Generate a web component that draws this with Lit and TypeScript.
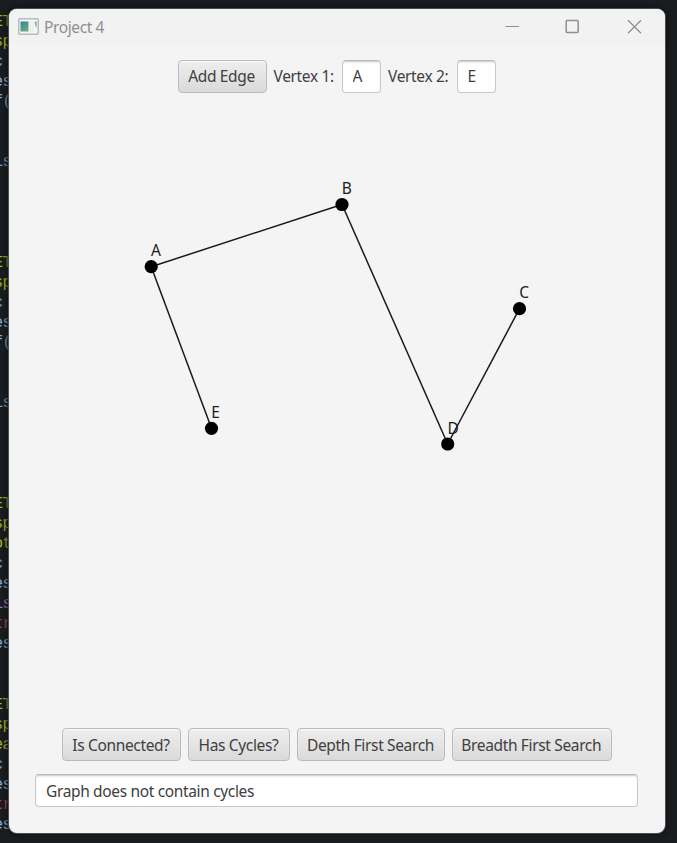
import { LitElement, html, svg, css } from "lit";
import { customElement, property } from "lit/decorators.js";

type Tone = "lime" | "blue" | "sky" | "violet" | "red";

// Editor rows visible beside the window; empty rows keep the line rhythm.
const CODE: Record<number, [string, Tone]> = {
  0: ["ET", "lime"], 1: ["sp", "lime"], 2: ["c", "blue"], 3: ["es", "sky"], 4: ["f(", "sky"], 7: ["is", "blue"],
  12: ["ET", "lime"], 13: ["sp", "lime"], 14: ["c", "blue"], 15: ["es", "sky"], 16: ["f(", "sky"], 19: ["is", "blue"],
  24: ["ET", "lime"], 25: ["sp", "lime"], 26: ["ot", "lime"], 27: ["c", "blue"], 28: ["es", "sky"], 29: ["is", "violet"],
  30: ["tr", "red"], 31: ["es", "sky"],
  34: ["ET", "lime"], 35: ["sp", "lime"], 36: ["ea", "lime"], 37: ["c", "blue"], 38: ["es", "sky"], 39: ["tr", "red"], 40: ["es", "sky"],
};

const VERTICES: Record<string, [number, number]> = {
  A: [142.2, 173.7], B: [333, 111.5], C: [510.5, 215.7], D: [438.7, 351], E: [202.5, 335.3],
};
const EDGES = ["AB", "AE", "BD", "DC"];

@customElement("code-gutter")
export class CodeGutter extends LitElement {
  static styles = css`
    :host { display: block; overflow: hidden; padding-top: 11.5px; box-sizing: border-box;
      font: 16px/20.1px "Liberation Mono", monospace; }
    .row { height: 20.1px; margin-left: -6.5px; white-space: pre; letter-spacing: -0.6px; }
    .lime { color: #a3b521; }
    .blue { color: #6fa3c7; }
    .sky { color: #86afd0; }
    .violet { color: #a473b5; }
    .red { color: #b8464b; }
  `;
  render() {
    return Array.from({ length: 41 }, (_, i) => {
      const [text, tone] = CODE[i] ?? ["", "sky"];
      return html`<div class="row ${tone}">${text}</div>`;
    });
  }
}

@customElement("title-bar")
export class TitleBar extends LitElement {
  static styles = css`
    :host { display: flex; align-items: center; height: 36px; background: #f2f2f2; padding-left: 9px;
      font: 15.5px/20px "Noto Sans", sans-serif; color: #8f8f8f; box-sizing: border-box; }
    .icon { width: 21px; height: 17px; margin-right: 5px; flex: none; position: relative; top: -1px; }
    .title { letter-spacing: -0.38px; flex: 1; }
    .controls { width: 162px; height: 36px; flex: none; }
  `;
  render() {
    return html`
      <svg class="icon" viewBox="0 0 21 17">
        <rect x="0.75" y="0.75" width="19.5" height="15.5" rx="1" fill="#f5f5f5" stroke="#b6bbc0" stroke-width="1.5" />
        <defs><linearGradient id="g" x2="0.6" y2="1"><stop offset="0" stop-color="#3b7fa6" /><stop offset="1" stop-color="#63b07c" /></linearGradient></defs>
        <rect x="2.5" y="3.5" width="8" height="10" fill="url(#g)" />
        <path d="M12.5 3v11M15 3v11" stroke="#e5e7e8" />
        <path d="M16.8 3.5h1.7v6.5q-1.7-2-1.7-6.5" fill="#64aa96" />
      </svg>
      <span class="title">Project 4</span>
      <svg class="controls" viewBox="0 0 162 36" fill="none" stroke="#8f8f8f" stroke-width="1.3">
        <path d="M2.5 17.5h13.5" stroke-width="1" />
        <rect x="63.2" y="11.6" width="12" height="12" rx="1" stroke-width="1.5" />
        <path d="M125 11.3l13 13M138 11.3l-13 13" />
      </svg>`;
  }
}

@customElement("push-button")
export class PushButton extends LitElement {
  static styles = css`
    :host { display: block; flex: none; }
    .button { box-sizing: border-box; width: 100%; height: 33px; padding: 0 1px 0 0; border: 1.5px solid #bababa; border-radius: 4px;
      background: linear-gradient(#eeeeee, #dadada); box-shadow: inset 0 1px 1px #fafafa;
      font: inherit; letter-spacing: inherit; color: #404040; white-space: nowrap; }
  `;
  render() {
    return html`<button class="button"><slot></slot></button>`;
  }
}

@customElement("text-box")
export class TextBox extends LitElement {
  @property() value = "";
  static styles = css`
    :host { display: block; flex: none; }
    .input { display: block; box-sizing: border-box; width: 100%; height: 33px; padding: 0 0 0 10px; outline: 0;
      border: 1px solid #c9c9c9; border-top-color: #b8b8b8; border-radius: 4px; background: #fff;
      box-shadow: inset 0 2px 2px -1px #c8c8c8; font: inherit; letter-spacing: inherit; color: #404040; }
  `;
  render() {
    return html`<input class="input" .value=${this.value} />`;
  }
}

@customElement("graph-pane")
export class GraphPane extends LitElement {
  static styles = css`
    :host { display: block; flex: 1; min-height: 0; }
    .graph { display: block; width: 656px; height: 100%; overflow: visible; font: 15.5px "Noto Sans", sans-serif; }
    .edge { stroke: #1a1a1a; stroke-width: 1.5; }
    .label { fill: #1c1c1c; }
  `;
  render() {
    return html`<svg class="graph">
      ${EDGES.map(([a, b]) => svg`<line class="edge" x1=${VERTICES[a][0]} y1=${VERTICES[a][1]} x2=${VERTICES[b][0]} y2=${VERTICES[b][1]} />`)}
      ${Object.entries(VERTICES).map(([name, [x, y]]) => svg`
        <circle cx=${x} cy=${y} r="6.6" />
        <text class="label" x=${x - 0.3} y=${y - 10.5}>${name}</text>`)}
    </svg>`;
  }
}

@customElement("app-root")
export class AppRoot extends LitElement {
  static styles = css`
    :host { display: grid; grid-template-columns: 9px 656px 12px; width: 677px; height: 843px; overflow: hidden;
      background: #1a1d20; }
    .window { display: flex; flex-direction: column; height: 824px; margin-top: 9px; border-radius: 8px; overflow: hidden;
      background: #f4f4f4; box-shadow: 0 0 0 1px #4a4c4e, 0 0 5px 2px #0f1113; box-sizing: border-box;
      font: 15.5px/20px "Noto Sans", sans-serif; color: #404040; letter-spacing: -0.35px; z-index: 1; }
    .bar { display: flex; align-items: center; }
    .top { padding: 14.5px 0 0 168.5px; }
    .label { flex: none; white-space: nowrap; }
    .first { width: 61px; margin: 0 7px; }
    .second { width: 61.5px; margin: 0 7px 0 7px; }
    .add { width: 89px; }
    .vertex { width: 39.5px; }
    .actions { gap: 7px; padding-left: 53px; }
    .connected { width: 119px; }
    .cycles { width: 102px; }
    .depth { width: 148px; }
    .breadth { width: 159.5px; }
    .result { margin: 13px 27px 26px 26px; }
  `;
  render() {
    return html`
      <code-gutter></code-gutter>
      <main class="window">
        <title-bar></title-bar>
        <div class="bar top">
          <push-button class="add">Add Edge</push-button>
          <span class="label first">Vertex 1:</span>
          <text-box class="vertex" value="A"></text-box>
          <span class="label second">Vertex 2:</span>
          <text-box class="vertex" value="E"></text-box>
        </div>
        <graph-pane></graph-pane>
        <div class="bar actions">
          <push-button class="connected">Is Connected?</push-button>
          <push-button class="cycles">Has Cycles?</push-button>
          <push-button class="depth">Depth First Search</push-button>
          <push-button class="breadth">Breadth First Search</push-button>
        </div>
        <text-box class="result" value="Graph does not contain cycles"></text-box>
      </main>`;
  }
}
